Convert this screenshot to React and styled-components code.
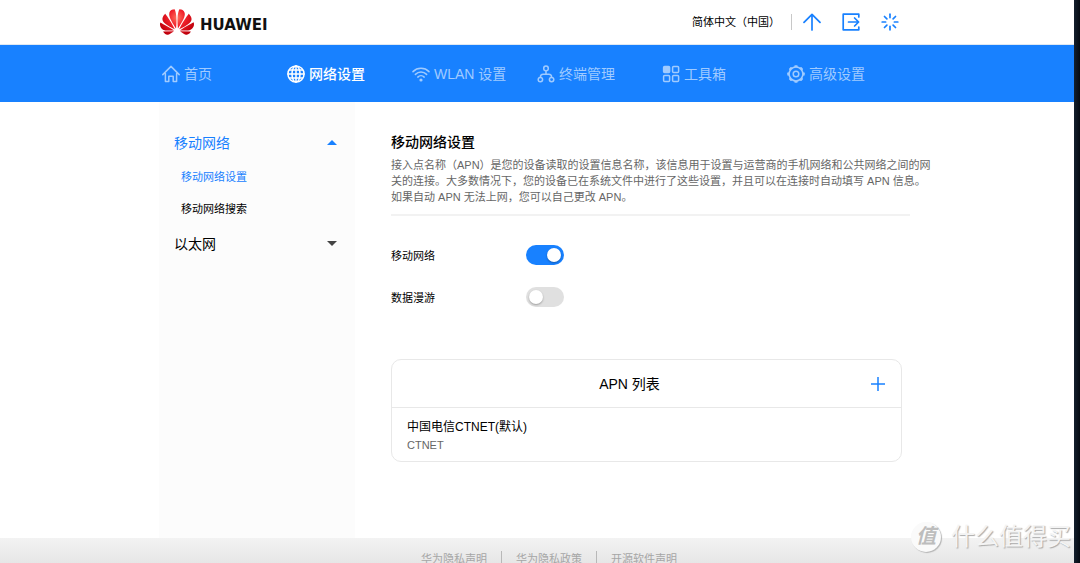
import React, { useState } from "react";
import styled, { createGlobalStyle, css } from "styled-components";

const GlobalStyle = createGlobalStyle`
  * {
    box-sizing: border-box;
  }
  body {
    margin: 0;
    background: #060c14;
    color: #000;
    font-family: "Liberation Sans", "Noto Sans CJK SC", sans-serif;
    font-size: 11px;
    line-height: 16px;
  }
  button, input, select {
    font: inherit;
    color: inherit;
  }
  a {
    color: inherit;
    text-decoration: none;
  }
`;

const blue = "#1881ff";

const Desktop = styled.div`
  position: relative;
  height: 100vh;
  padding-right: 6px;
  overflow: hidden;
  background: linear-gradient(to right, #14202e, #050a12) right / 6px 100% no-repeat;
`;

const Page = styled.div`
  display: flex;
  flex-direction: column;
  min-height: 100%;
  background: #fff;
`;

const Container = styled.div`
  display: flex;
  width: 100%;
  max-width: 756px;
  margin: 0 auto;
`;

const Header = styled.header`
  border-bottom: 1px solid #dfe8f2;

  ${Container} {
    height: 44px;
    align-items: center;
    justify-content: space-between;
    padding: 0 16px 0 1px;
  }
`;

const Logo = styled.a`
  display: flex;
  align-items: center;
  gap: 6px;
  color: #111;
  font-family: "DejaVu Sans", sans-serif;
  font-size: 15px;
  font-weight: 700;

  span {
    padding-top: 5px;
  }
`;

const Tools = styled.div`
  display: flex;
  align-items: center;
  gap: 21px;
`;

const Language = styled.label`
  display: flex;
  padding-right: 11px;
  margin-right: -10px;
  border-right: 1px solid #c8c8c8;

  select {
    appearance: none;
    border: 0;
    padding: 0;
    background: none;
  }
`;

const IconButton = styled.button`
  display: flex;
  align-items: center;
  justify-content: center;
  border: 0;
  padding: 0;
  background: none;
  color: ${blue};
  cursor: pointer;
`;

const Nav = styled.nav`
  background: ${blue};

  ${Container} {
    height: 57px;
    padding: 0 3px;
  }
`;

const NavItem = styled.a`
  display: flex;
  flex: 0 0 125px;
  align-items: center;
  gap: 4px;
  color: ${({ $active }) => ($active ? "#fff" : "#a0cbff")};
  font-size: 14px;
  font-weight: ${({ $active }) => ($active ? 500 : 400)};
  white-space: nowrap;
`;

const Body = styled(Container)`
  flex: 1 0 436px;
`;

const Sidebar = styled.aside`
  flex: 0 0 196px;
  padding-top: 22px;
  background: #fcfcfc;
`;

const MenuTitle = styled.button`
  display: flex;
  align-items: center;
  justify-content: space-between;
  width: 100%;
  height: 37px;
  border: 0;
  padding: 0 18px 0 15px;
  background: none;
  color: ${({ $open }) => ($open ? blue : "#000")};
  font-size: 14px;
  cursor: pointer;

  &::after {
    content: "";
    border: 5px solid transparent;
    ${({ $open }) =>
      $open
        ? css`
            border-top: 0;
            border-bottom-color: ${blue};
          `
        : css`
            border-bottom: 0;
            border-top-color: #444;
          `}
  }
`;

const MenuLink = styled.a`
  display: block;
  padding: 8px 22px;
  color: ${({ $active }) => ($active ? blue : "#000")};
`;

const Content = styled.main`
  flex: 1;
  min-width: 0;
  padding: 30px 5px 0 36px;
`;

const Title = styled.h1`
  margin: 0 0 5px;
  font-size: 14px;
  font-weight: 500;
  line-height: 20px;
`;

const Description = styled.p`
  margin: 0;
  color: #666;
  white-space: nowrap;
`;

const Settings = styled.div`
  margin-top: 9px;
  padding: 18px 0 41px;
  border-top: 2px solid #f2f2f2;
`;

const SettingRow = styled.label`
  display: grid;
  grid-template-columns: 135px auto;
  align-items: center;
  justify-content: start;
  height: 42px;

  span {
    padding-top: 2px;
  }
`;

const Switch = styled.input`
  appearance: none;
  display: flex;
  width: 38px;
  height: 20px;
  margin: 0;
  padding: 3px;
  border-radius: 10px;
  background: #e0e0e0;
  cursor: pointer;

  &::before {
    content: "";
    width: 14px;
    height: 14px;
    border-radius: 50%;
    background: #fff;
    box-shadow: 0 1px 2px rgba(0, 0, 0, 0.3);
  }

  &:checked {
    justify-content: flex-end;
    background: ${blue};
  }
`;

const Card = styled.section`
  margin-right: 8px;
  border: 1px solid #e8e8e8;
  border-radius: 10px;
`;

const CardHeader = styled.div`
  display: flex;
  align-items: center;
  height: 48px;
  padding-right: 12px;
  border-bottom: 1px solid #e8e8e8;

  h2 {
    flex: 1;
    margin: 0;
    font-size: 14px;
    font-weight: 400;
    text-align: center;
  }

  button {
    width: 22px;
  }
`;

const ApnItem = styled.div`
  padding: 10px 15px 7px;
  color: #666;
  line-height: 18px;

  strong {
    display: block;
    color: #000;
    font-size: 12px;
    font-weight: 400;
  }
`;

const Footer = styled.footer`
  display: flex;
  justify-content: center;
  height: 56px;
  padding: 13px 0 0 24px;
  background: linear-gradient(to bottom, #f3f3f3, #e6e6e6 25px);
  color: #a6a6a6;

  a {
    height: 16px;
    padding: 0 14px;
  }
  a + a {
    border-left: 1px solid #b8b8b8;
  }
`;

const Watermark = styled.div`
  position: absolute;
  right: 9px;
  bottom: 10px;
  display: flex;
  align-items: center;
  gap: 10px;
  color: #f4f4f4;
  font-size: 24px;
  line-height: 32px;
  text-shadow: 1px 1px 1px #aaa;
`;

const Badge = styled.span`
  width: 30px;
  height: 30px;
  border-radius: 50%;
  background: #fafafa;
  box-shadow: 1px 1px 1px #b5b5b5;
  color: #bdbdbd;
  font-size: 20px;
  font-style: italic;
  font-weight: 700;
  line-height: 28px;
  text-align: center;
  text-shadow: none;
`;

const Icon = ({ children, size = 18, width = 1.5 }) => (
  <svg
    width={size}
    height={size}
    viewBox={`0 0 ${size} ${size}`}
    fill="none"
    stroke="currentColor"
    strokeWidth={width}
    strokeLinecap="round"
    strokeLinejoin="round"
    aria-hidden="true"
  >
    {children}
  </svg>
);

const Petals = () => (
  <svg width="34" height="26" viewBox="0 2.9 24 18.2" aria-hidden="true">
    <defs>
      <radialGradient id="petal" gradientUnits="userSpaceOnUse" cx="12" cy="9" r="13">
        <stop offset="0" stopColor="#ff7260" />
        <stop offset="0.45" stopColor="#f0202a" />
        <stop offset="1" stopColor="#c0000c" />
      </radialGradient>
    </defs>
    <path
      fill="url(#petal)"
      d="M3.67 6.14S1.82 7.91 1.72 9.78v.35c.08 1.51 1.22 2.4 1.22 2.4 1.83 1.79 6.26 4.04 7.3 4.55 0 0 .06.03.1-.01l.02-.04v-.04C7.52 10.8 3.67 6.14 3.67 6.14zM9.65 18.6c-.02-.08-.1-.08-.1-.08l-7.38.26c.8 1.43 2.15 2.53 3.56 2.2.96-.25 3.16-1.78 3.88-2.3.06-.05.04-.09.04-.09zm.08-.78C6.49 15.63.21 12.28.21 12.28c-.15.46-.2.9-.21 1.3v.07c0 1.07.4 1.82.4 1.82.8 1.69 2.34 2.2 2.34 2.2.7.3 1.4.31 1.4.31.12.02 4.4 0 5.54 0 .05 0 .08-.05.08-.05v-.06c0-.03-.03-.05-.03-.05zM9.06 3.19a3.42 3.42 0 00-2.57 3.15v.41c.03.6.16 1.05.16 1.05.66 2.9 3.86 7.65 4.55 8.65.05.05.1.03.1.03a.1.1 0 00.06-.1c1.06-10.6-1.11-13.42-1.11-13.42-.32.02-1.19.23-1.19.23zm8.299 2.27s-.49-1.8-2.44-2.28c0 0-.57-.14-1.17-.22 0 0-2.18 2.81-1.12 13.43.01.07.06.08.06.08.07.03.1-.03.1-.03.72-1.03 3.9-5.76 4.55-8.64 0 0 .36-1.4.02-2.34zm-2.92 13.07s-.07 0-.09.05c0 0-.01.07.03.1.7.51 2.85 2 3.88 2.3 0 0 .16.05.43.06h.14c.69-.02 1.9-.37 3-2.26l-7.4-.25zm7.83-8.41c.14-2.06-1.94-3.97-1.94-3.98 0 0-3.85 4.66-6.67 10.8 0 0-.03.08.02.13l.04.01h.06c1.06-.53 5.46-2.77 7.28-4.54 0 0 1.15-.93 1.21-2.42zm1.52 2.14s-6.28 3.37-9.52 5.55c0 0-.05.04-.03.11 0 0 .03.06.07.06 1.16 0 5.56 0 5.67-.02 0 0 .57-.02 1.27-.29 0 0 1.56-.5 2.37-2.27 0 0 .73-1.45.17-3.14z"
    />
  </svg>
);

const rays = [0, 45, 90, 135, 180, 225, 270, 315];

const navItems = [
  {
    label: "首页",
    icon: <path d="M0.8 9.6L9 1.4l8.2 8.2M3.4 8.6v8h3.4v-5.4h4.4v5.4h3.4v-8" />,
  },
  {
    label: "网络设置",
    active: true,
    icon: (
      <>
        <circle cx="9" cy="9" r="8.1" />
        <ellipse cx="9" cy="9" rx="4" ry="8.1" />
        <path d="M9 1v16M1 9h16M2.3 5h13.4M2.3 13h13.4" />
      </>
    ),
  },
  {
    label: "WLAN 设置",
    icon: (
      <>
        <path d="M1 6.6a11.4 11.4 0 0 1 16 0M3.4 9.4a8 8 0 0 1 11.2 0M5.8 12.1a4.6 4.6 0 0 1 6.4 0" />
        <circle cx="9" cy="15" r="1.6" fill="currentColor" stroke="none" />
      </>
    ),
  },
  {
    label: "终端管理",
    icon: (
      <>
        <circle cx="9" cy="3.4" r="2.3" />
        <circle cx="3.4" cy="14.6" r="2.2" />
        <circle cx="14.6" cy="14.6" r="2.2" />
        <path d="M9 6v3.2M3.4 12.2c0-1.9 1-3 2.8-3h5.6c1.8 0 2.8 1.1 2.8 3" />
      </>
    ),
  },
  {
    label: "工具箱",
    icon: (
      <>
        <rect x="1.6" y="1.4" width="6" height="6" rx="1" fill="currentColor" />
        <rect x="10.6" y="1.4" width="6" height="6" rx="1" />
        <rect x="1.6" y="10.4" width="6" height="6" rx="1" />
        <rect x="10.6" y="10.4" width="6" height="6" rx="1" />
      </>
    ),
  },
  {
    label: "高级设置",
    icon: (
      <>
        <circle cx="9" cy="9" r="6.9" />
        <circle cx="9" cy="9" r="2.8" />
        {rays.map((angle) => (
          <path key={angle} d="M8.2 1.2h1.6" strokeWidth="1.9" transform={`rotate(${angle} 9 9)`} />
        ))}
      </>
    ),
  },
];

function App() {
  const [mobileData, setMobileData] = useState(true);
  const [roaming, setRoaming] = useState(false);

  return (
    <>
      <GlobalStyle />
      <Desktop lang="zh-CN">
        <Page>
          <Header>
            <Container>
              <Logo href="#">
                <Petals />
                <span>HUAWEI</span>
              </Logo>
              <Tools>
                <Language>
                  <select aria-label="语言">
                    <option>简体中文（中国）</option>
                  </select>
                </Language>
                <IconButton type="button" aria-label="更新">
                  <Icon width={1.7}>
                    <path d="M9 17V1.5M1 9.4L9 1.3l8 8.1" />
                  </Icon>
                </IconButton>
                <IconButton type="button" aria-label="退出">
                  <Icon width={1.7}>
                    <path d="M16.8 4V1.2H1.2v15.6h15.6V14M6.5 9h10M12.600 5l4 4-4 4" />
                  </Icon>
                </IconButton>
                <IconButton type="button" aria-label="重启">
                  <Icon width={1.7}>
                    {rays.map((angle) => (
                      <path key={angle} d="M9 1.2v3.400" transform={`rotate(${angle} 9 9)`} />
                    ))}
                  </Icon>
                </IconButton>
              </Tools>
            </Container>
          </Header>
          <Nav>
            <Container>
              {navItems.map(({ label, icon, active }) => (
                <NavItem key={label} href="#" $active={active}>
                  <Icon>{icon}</Icon>
                  {label}
                </NavItem>
              ))}
            </Container>
          </Nav>
          <Body>
            <Sidebar>
              <MenuTitle type="button" $open>
                移动网络
              </MenuTitle>
              <MenuLink href="#" $active>
                移动网络设置
              </MenuLink>
              <MenuLink href="#">移动网络搜索</MenuLink>
              <MenuTitle type="button">以太网</MenuTitle>
            </Sidebar>
            <Content>
              <Title>移动网络设置</Title>
              <Description>
                接入点名称（APN）是您的设备读取的设置信息名称，该信息用于设置与运营商的手机网络和公共网络之间的网
                <br />
                关的连接。大多数情况下，您的设备已在系统文件中进行了这些设置，并且可以在连接时自动填写 APN 信息。
                <br />
                如果自动 APN 无法上网，您可以自己更改 APN。
              </Description>
              <Settings>
                <SettingRow>
                  <span>移动网络</span>
                  <Switch
                    type="checkbox"
                    checked={mobileData}
                    onChange={(e) => setMobileData(e.target.checked)}
                  />
                </SettingRow>
                <SettingRow>
                  <span>数据漫游</span>
                  <Switch
                    type="checkbox"
                    checked={roaming}
                    onChange={(e) => setRoaming(e.target.checked)}
                  />
                </SettingRow>
              </Settings>
              <Card>
                <CardHeader>
                  <h2>APN 列表</h2>
                  <IconButton type="button" aria-label="添加">
                    <Icon size={14} width={1.5}>
                      <path d="M7 0v14M0 7h14" />
                    </Icon>
                  </IconButton>
                </CardHeader>
                <ApnItem>
                  <strong>中国电信CTNET(默认)</strong>
                  CTNET
                </ApnItem>
              </Card>
            </Content>
          </Body>
          <Footer>
            <a href="#">华为隐私声明</a>
            <a href="#">华为隐私政策</a>
            <a href="#">开源软件声明</a>
          </Footer>
        </Page>
        <Watermark>
          <Badge>值</Badge>
          什么值得买
        </Watermark>
      </Desktop>
    </>
  );
}

export default App;
